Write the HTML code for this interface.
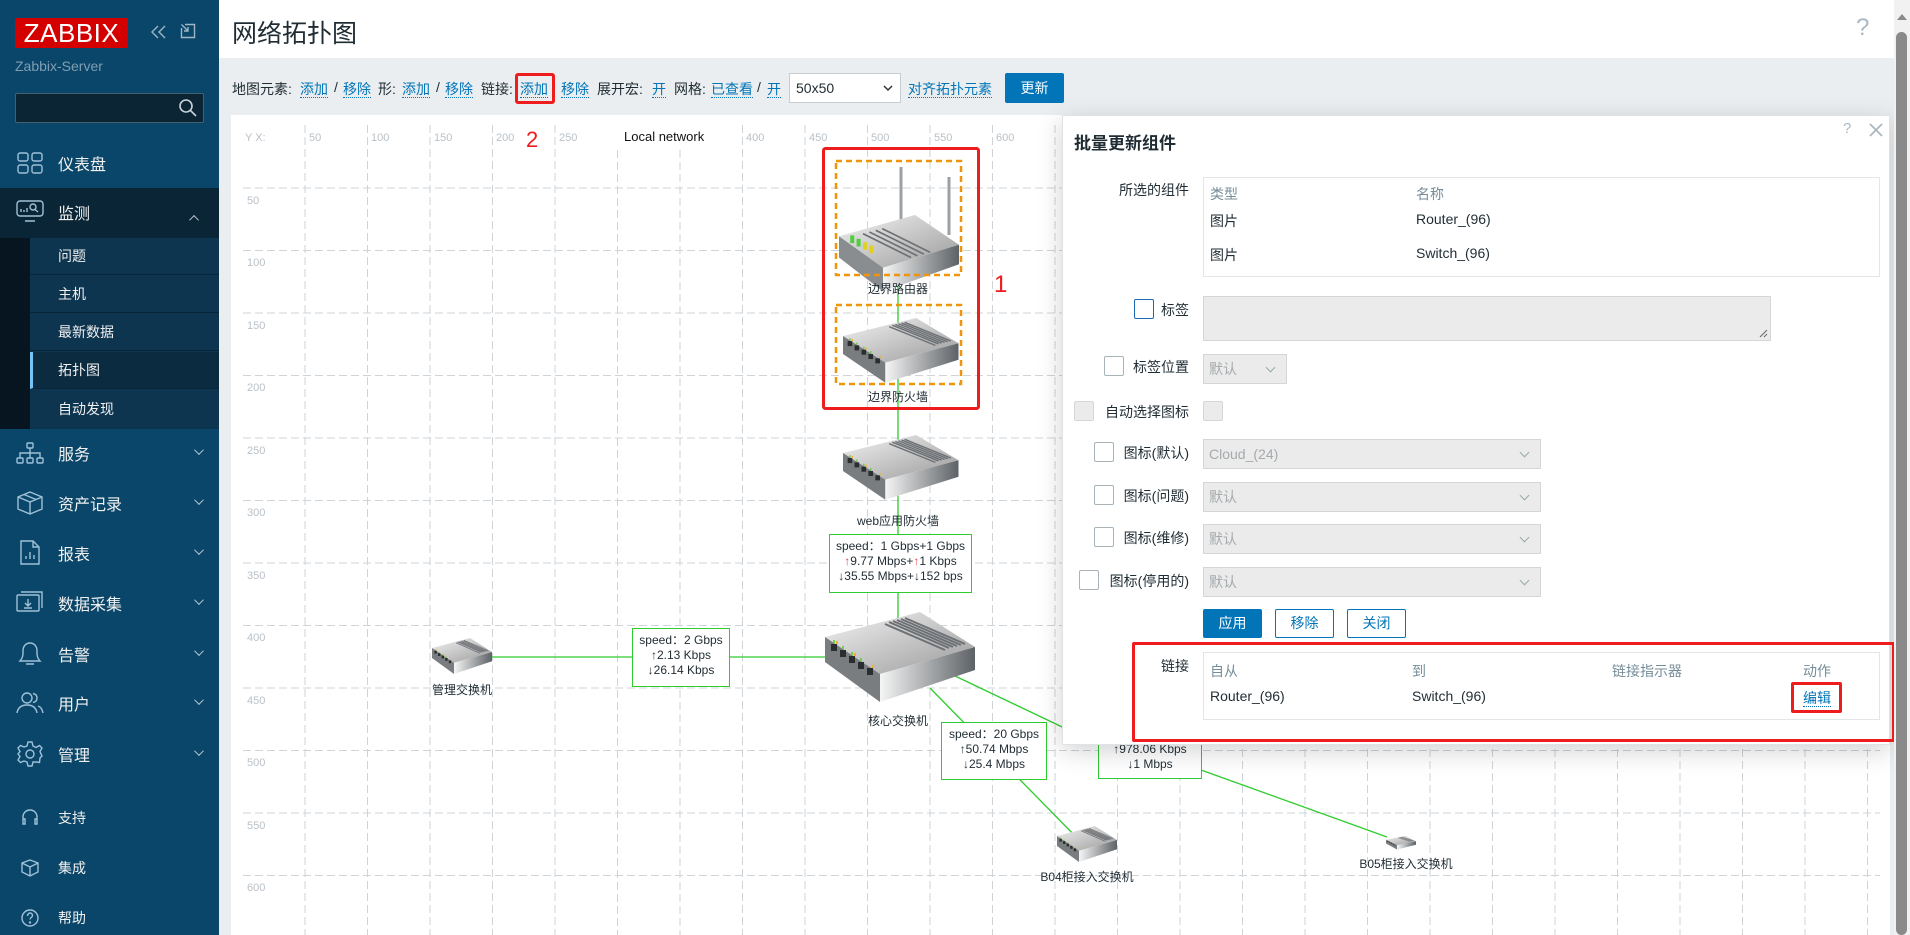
<!DOCTYPE html>
<html><head><meta charset="utf-8">
<style>
*{margin:0;padding:0;box-sizing:border-box}
body{width:1910px;height:935px;overflow:hidden;background:#ebeef0;font-family:"Liberation Sans","Noto Sans CJK SC",sans-serif;font-size:14px;color:#1f2c33;position:relative}
.a{position:absolute;white-space:nowrap}
#sb{position:absolute;left:0;top:0;width:219px;height:935px;background:#0a4669;color:#f2f2f2}
.mi{position:absolute;left:0;width:219px;font-size:16px;color:#f0f0f0}
.mi .t{position:absolute;left:58px;transform:translateY(-50%)}
.mi svg.ic{position:absolute;left:16px;transform:translateY(-50%)}
.mi .ch{position:absolute;left:193px;transform:translateY(-50%);width:7px;height:7px;border-right:1.3px solid #b9c7d0;border-bottom:1.3px solid #b9c7d0;margin-top:-4px;rotate:45deg}
.sub{position:absolute;left:30px;width:189px;height:37px;border-bottom:1px solid #08263a;font-size:14px;color:#f0f0f0;padding-left:28px;line-height:37px}
.lk{color:#0275b8;border-bottom:1px dotted #0275b8}
.tb{position:absolute;top:79px;white-space:nowrap;font-size:14px}
.spd{position:absolute;border:1.5px solid #2ecc2e;background:#fff;font-size:12px;line-height:15px;text-align:center;color:#1f2c33;padding-top:4px}
.dl{position:absolute;font-size:12px;color:#1f2c33;transform:translateX(-50%);white-space:nowrap}
.cb{position:absolute;width:20px;height:20px;border:1px solid #a9b3ba;border-radius:2px;background:#fff}
.cbd{background:#ebebeb;border-color:#d3d7da}
.sel{position:absolute;background:#ebebeb;border:1px solid #d3d7da;color:#a5aaad;padding-left:5px;line-height:28px;font-size:14px}
.sel:after{content:"";position:absolute;right:12px;top:9px;width:6px;height:6px;border-right:1.3px solid #9aa;border-bottom:1.3px solid #9aa;transform:rotate(45deg)}
.fl{position:absolute;text-align:right;font-size:14px;color:#1f2c33}
.btn{position:absolute;height:29px;line-height:27px;text-align:center;border:1px solid #0275b8;color:#0275b8;background:#fff;border-radius:2px;font-size:14px}
</style></head><body>

<!-- sidebar -->
<div id="sb">
 <div class="a" style="left:15px;top:18px;width:113px;height:30px;background:#d40000;color:#fff;font-size:26px;line-height:30px;text-align:center;letter-spacing:0.5px">ZABBIX</div>
 <svg class="a" style="left:150px;top:24px" width="18" height="16" viewBox="0 0 18 16" fill="none" stroke="#9fb6c5" stroke-width="1.4"><path d="M8 2L2 8L8 14M15 2L9 8L15 14"/></svg>
 <svg class="a" style="left:180px;top:23px" width="16" height="16" viewBox="0 0 16 16" fill="none" stroke="#9fb6c5" stroke-width="1.4"><path d="M5 1.5H14.5V14.5H1.5V5M1.5 1.5L8 8M8 4V8H4"/></svg>
 <div class="a" style="left:15px;top:58px;color:#7f9eb2;font-size:14px">Zabbix-Server</div>
 <div class="a" style="left:15px;top:93px;width:189px;height:30px;background:#0b2535;border:1px solid #44606f;border-radius:2px"></div>
 <svg class="a" style="left:178px;top:98px" width="20" height="20" viewBox="0 0 20 20" fill="none" stroke="#c8d4da" stroke-width="1.6"><circle cx="8" cy="8" r="6"/><path d="M12.5 12.5L18 18"/></svg>

 <div class="mi" style="top:163px"><svg class="ic" width="28" height="22" viewBox="0 0 28 22" fill="none" stroke="#9fc1d8" stroke-width="1.4"><rect x="2" y="1" width="10" height="8" rx="2"/><rect x="16" y="1" width="10" height="8" rx="2"/><rect x="2" y="13" width="10" height="8" rx="2"/><rect x="16" y="13" width="10" height="8" rx="2"/></svg><span class="t">仪表盘</span></div>
 <div class="a" style="left:0;top:188px;width:219px;height:50px;background:#0a2536"></div>
 <div class="mi" style="top:212px"><svg class="ic" width="28" height="24" viewBox="0 0 28 24" fill="none" stroke="#9fc1d8" stroke-width="1.4"><rect x="1" y="1" width="26" height="15" rx="3"/><path d="M9 21H19M5 12V9M8 12V10M11 12V8"/><circle cx="17" cy="7" r="3"/><path d="M19 9.5L22 12"/></svg><span class="t">监测</span><span class="ch" style="rotate:225deg;margin-top:2px"></span></div>
 <div class="a" style="left:0;top:238px;width:30px;height:191px;background:#061520"></div>
 <div class="a" style="left:30px;top:238px;width:189px;height:191px;background:#0d3550"></div>
 <div class="sub" style="top:238px">问题</div>
 <div class="sub" style="top:276px">主机</div>
 <div class="sub" style="top:314px">最新数据</div>
 <div class="sub" style="top:352px;background:#0b2b40;border-left:3px solid #73c5f5;padding-left:25px">拓扑图</div>
 <div class="sub" style="top:391px;border:none">自动发现</div>
 <div class="mi" style="top:453px"><svg class="ic" width="28" height="22" viewBox="0 0 28 22" fill="none" stroke="#9fc1d8" stroke-width="1.4"><rect x="11" y="1" width="6" height="5" rx="1"/><rect x="1" y="16" width="6" height="5" rx="1"/><rect x="11" y="16" width="6" height="5" rx="1"/><rect x="21" y="16" width="6" height="5" rx="1"/><path d="M14 6V16M4 16V11H24V16"/></svg><span class="t">服务</span><span class="ch"></span></div>
 <div class="mi" style="top:503px"><svg class="ic" width="28" height="26" viewBox="0 0 28 26" fill="none" stroke="#9fc1d8" stroke-width="1.4"><path d="M14 2L26 7V19L14 24L2 19V7ZM2 7L14 12L26 7M14 12V24M8 4.5L20 9.5"/></svg><span class="t">资产记录</span><span class="ch"></span></div>
 <div class="mi" style="top:553px"><svg class="ic" width="28" height="26" viewBox="0 0 28 26" fill="none" stroke="#9fc1d8" stroke-width="1.4"><path d="M5 1H17L23 7V24H5ZM17 1V7H23M10 19V16M14 19V12M18 19V15"/></svg><span class="t">报表</span><span class="ch"></span></div>
 <div class="mi" style="top:603px"><svg class="ic" width="28" height="24" viewBox="0 0 28 24" fill="none" stroke="#9fc1d8" stroke-width="1.4"><rect x="1" y="4" width="22" height="16" rx="1"/><path d="M5 1H26V17M12 8V15M9 12L12 15L15 12M8 17H16"/></svg><span class="t">数据采集</span><span class="ch"></span></div>
 <div class="mi" style="top:654px"><svg class="ic" width="28" height="26" viewBox="0 0 28 26" fill="none" stroke="#9fc1d8" stroke-width="1.4"><path d="M4 20C7 17 7 14 7 10C7 5 10 2 14 2C18 2 21 5 21 10C21 14 21 17 24 20ZM10 23H18"/></svg><span class="t">告警</span><span class="ch"></span></div>
 <div class="mi" style="top:703px"><svg class="ic" width="28" height="24" viewBox="0 0 28 24" fill="none" stroke="#9fc1d8" stroke-width="1.4"><circle cx="11" cy="7" r="5"/><path d="M1 22C2 16 6 14 11 14C16 14 20 16 21 22M17 2.5C20 3 21 5 21 7C21 9 20 11 17 11.5M22 15C25 16 26 18 27 22"/></svg><span class="t">用户</span><span class="ch"></span></div>
 <div class="mi" style="top:754px"><svg class="ic" width="28" height="28" viewBox="0 0 28 28" fill="none" stroke="#9fc1d8" stroke-width="1.4"><circle cx="14" cy="14" r="4"/><path d="M12 2H16L17 6L20 7.5L23.5 5.5L26 8L24 11.5L25 14L26 16L24 18L23.5 22.5L20 22L17 22L16 26H12L11 22L8 21L4.5 22.5L2 20L4 16.5L2 14L4 11.5L2 8L4.5 5.5L8 7L11 6Z"/></svg><span class="t">管理</span><span class="ch"></span></div>
 <div class="mi" style="top:818px;font-size:14px"><svg class="ic" width="28" height="20" viewBox="0 0 28 20" fill="none" stroke="#9fc1d8" stroke-width="1.4"><path d="M7 14V9C7 5 10 2 14 2C18 2 21 5 21 9V14M7 11H9V16H7ZM19 11H21V16H19Z"/></svg><span class="t">支持</span></div>
 <div class="mi" style="top:868px;font-size:14px"><svg class="ic" width="28" height="20" viewBox="0 0 28 20" fill="none" stroke="#9fc1d8" stroke-width="1.4"><path d="M14 2L22 5V14L14 18L6 14V5ZM6 5L14 9L22 5M14 9V18"/></svg><span class="t">集成</span></div>
 <div class="mi" style="top:918px;font-size:14px"><svg class="ic" width="28" height="20" viewBox="0 0 28 20" fill="none" stroke="#9fc1d8" stroke-width="1.4"><circle cx="14" cy="10" r="8"/><path d="M11.5 8C11.5 6 13 5 14 5C15.5 5 16.5 6 16.5 7.5C16.5 9.5 14 9.5 14 11.5"/><circle cx="14" cy="14.5" r="0.5"/></svg><span class="t">帮助</span></div>
</div>

<!-- header -->
<div class="a" style="left:219px;top:0;width:1676px;height:58px;background:#fff"></div>
<div class="a" style="left:232px;top:14px;font-size:25px;color:#1f2c33">网络拓扑图</div>
<div class="a" style="left:1856px;top:14px;font-size:24px;color:#aab8c2">?</div>

<!-- toolbar -->
<div class="tb" style="left:232px">地图元素:</div>
<div class="tb" style="left:300px"><span class="lk">添加</span></div>
<div class="tb" style="left:334px">/</div>
<div class="tb" style="left:343px"><span class="lk">移除</span></div>
<div class="tb" style="left:378px">形:</div>
<div class="tb" style="left:402px"><span class="lk">添加</span></div>
<div class="tb" style="left:436px">/</div>
<div class="tb" style="left:445px"><span class="lk">移除</span></div>
<div class="tb" style="left:481px">链接:</div>
<div class="tb" style="left:520px"><span class="lk">添加</span></div>
<div class="tb" style="left:561px"><span class="lk">移除</span></div>
<div class="tb" style="left:597px">展开宏:</div>
<div class="tb" style="left:652px"><span class="lk">开</span></div>
<div class="tb" style="left:674px">网格:</div>
<div class="tb" style="left:711px"><span class="lk">已查看</span></div>
<div class="tb" style="left:757px">/</div>
<div class="tb" style="left:767px"><span class="lk">开</span></div>
<div class="a" style="left:789px;top:73px;width:112px;height:30px;background:#fff;border:1px solid #c7ccd0;padding-left:6px;line-height:28px;font-size:14px">50x50</div>
<svg class="a" style="left:883px;top:84px" width="10" height="8" viewBox="0 0 10 8" fill="none" stroke="#333" stroke-width="1.5"><path d="M1 2L5 6L9 2"/></svg>
<div class="tb" style="left:908px"><span class="lk">对齐拓扑元素</span></div>
<div class="a" style="left:1005px;top:73px;width:59px;height:30px;background:#0275b8;color:#fff;line-height:30px;text-align:center;border-radius:2px">更新</div>
<div class="a" style="left:515px;top:73px;width:40px;height:31px;border:3px solid #ee1c1c;border-radius:3px"></div>

<!-- map -->
<div class="a" style="left:231px;top:115px;width:1659px;height:820px;background:#fff"></div>

<svg class="a" style="left:0;top:0" width="1910" height="935">
<g stroke="#cfd4d8" stroke-width="1" stroke-dasharray="8,4">
<line x1="305" y1="125" x2="305" y2="935"/><line x1="367.5" y1="125" x2="367.5" y2="935"/><line x1="430" y1="125" x2="430" y2="935"/><line x1="492.5" y1="125" x2="492.5" y2="935"/><line x1="555" y1="125" x2="555" y2="935"/><line x1="617.5" y1="150" x2="617.5" y2="935"/><line x1="680" y1="150" x2="680" y2="935"/><line x1="742.5" y1="125" x2="742.5" y2="935"/><line x1="805" y1="125" x2="805" y2="935"/><line x1="867.5" y1="125" x2="867.5" y2="935"/><line x1="930" y1="125" x2="930" y2="935"/><line x1="992.5" y1="125" x2="992.5" y2="935"/><line x1="1055" y1="125" x2="1055" y2="935"/><line x1="1117.5" y1="125" x2="1117.5" y2="935"/><line x1="1180" y1="125" x2="1180" y2="935"/><line x1="1242.5" y1="125" x2="1242.5" y2="935"/><line x1="1305" y1="125" x2="1305" y2="935"/><line x1="1367.5" y1="125" x2="1367.5" y2="935"/><line x1="1430" y1="125" x2="1430" y2="935"/><line x1="1492.5" y1="125" x2="1492.5" y2="935"/><line x1="1555" y1="125" x2="1555" y2="935"/><line x1="1617.5" y1="125" x2="1617.5" y2="935"/><line x1="1680" y1="125" x2="1680" y2="935"/><line x1="1742.5" y1="125" x2="1742.5" y2="935"/><line x1="1805" y1="125" x2="1805" y2="935"/><line x1="1867.5" y1="125" x2="1867.5" y2="935"/>
<line x1="243" y1="188" x2="1880" y2="188"/><line x1="243" y1="250.5" x2="1880" y2="250.5"/><line x1="243" y1="313" x2="1880" y2="313"/><line x1="243" y1="375.5" x2="1880" y2="375.5"/><line x1="243" y1="438" x2="1880" y2="438"/><line x1="243" y1="500.5" x2="1880" y2="500.5"/><line x1="243" y1="563" x2="1880" y2="563"/><line x1="243" y1="625.5" x2="1880" y2="625.5"/><line x1="243" y1="688" x2="1880" y2="688"/><line x1="243" y1="750.5" x2="1880" y2="750.5"/><line x1="243" y1="813" x2="1880" y2="813"/><line x1="243" y1="875.5" x2="1880" y2="875.5"/>
</g>
<g fill="#b9c1c7" font-size="11" font-family="Liberation Sans, sans-serif">
<text x="245" y="141">Y X:</text>
<text x="309" y="141">50</text><text x="371" y="141">100</text><text x="434" y="141">150</text><text x="496" y="141">200</text><text x="559" y="141">250</text><text x="746" y="141">400</text><text x="809" y="141">450</text><text x="871" y="141">500</text><text x="934" y="141">550</text><text x="996" y="141">600</text>
<text x="247" y="204">50</text><text x="247" y="266">100</text><text x="247" y="329">150</text><text x="247" y="391">200</text><text x="247" y="454">250</text><text x="247" y="516">300</text><text x="247" y="579">350</text><text x="247" y="641">400</text><text x="247" y="704">450</text><text x="247" y="766">500</text><text x="247" y="829">550</text><text x="247" y="891">600</text>
</g>
<text x="624" y="141" font-size="13" fill="#111" font-family="Liberation Sans, sans-serif">Local network</text>
<text x="526" y="147" font-size="22" fill="#ee1c1c" font-family="Liberation Sans, sans-serif">2</text>
<text x="994" y="292" font-size="24" fill="#ee1c1c" font-family="Liberation Sans, sans-serif">1</text>
<defs>
<linearGradient id="gt" x1="0" y1="0" x2="1" y2="1"><stop offset="0" stop-color="#f2f2f2"/><stop offset="1" stop-color="#9a9a9a"/></linearGradient>
<linearGradient id="gr" x1="0" y1="0" x2="1" y2="0"><stop offset="0" stop-color="#f5f5f5"/><stop offset="1" stop-color="#5d6266"/></linearGradient>
<g id="sw">
<polygon points="0,25 95,0 150,35 55,62" fill="url(#gt)"/>
<polygon points="0,25 55,62 55,90 0,50" fill="#7a7d80"/>
<polygon points="55,62 150,35 150,58 55,90" fill="url(#gr)"/>
<g stroke="#6d7175" stroke-width="2"><path d="M60 12L120 38M64 10L124 36M68 9L128 35M72 8L132 34M76 7L136 33M80 6L140 32"/></g>
<g fill="#2a2e30"><rect x="6" y="32" width="6" height="7"/><rect x="15" y="38" width="6" height="7"/><rect x="24" y="44" width="6" height="7"/><rect x="33" y="50" width="6" height="7"/><rect x="42" y="56" width="6" height="7"/></g>
<g fill="#6fd04a"><rect x="8" y="28" width="2" height="3"/><rect x="17" y="34" width="2" height="3"/><rect x="26" y="40" width="2" height="3"/><rect x="35" y="46" width="2" height="3"/></g>
<g fill="#f0b030"><rect x="11" y="29" width="2" height="3"/><rect x="29" y="41" width="2" height="3"/><rect x="47" y="53" width="2" height="3"/></g>
</g>
</defs>
<g stroke="#2ecc2e" stroke-width="1.3" fill="none">
<line x1="898" y1="275" x2="898" y2="630"/>
<line x1="490" y1="657" x2="832" y2="657"/>
<line x1="930" y1="688" x2="1082" y2="843"/>
<line x1="953" y1="675" x2="1100" y2="745"/>
<line x1="1201" y1="770" x2="1387" y2="837"/>
</g>
<g transform="translate(839,165)">
<line x1="62" y1="2" x2="62" y2="60" stroke="#9aa0a4" stroke-width="3"/>
<line x1="110" y1="12" x2="110" y2="70" stroke="#9aa0a4" stroke-width="3"/>
<g transform="translate(0,50) scale(0.8,0.85)"><polygon points="0,25 95,0 150,35 55,62" fill="url(#gt)"/><polygon points="0,25 55,62 55,90 0,50" fill="#8a8d90"/><polygon points="55,62 150,35 150,58 55,90" fill="url(#gr)"/><g stroke="#6d7175" stroke-width="2"><path d="M30 22L90 50M38 20L98 48M46 18L106 46M54 16L114 44"/></g><g fill="#4ece3a"><rect x="14" y="24" width="5" height="9"/><rect x="22" y="28" width="5" height="9"/></g><g fill="#e0d020"><rect x="30" y="32" width="5" height="9"/><rect x="38" y="36" width="5" height="9"/></g></g>
</g>
<use href="#sw" transform="translate(843,318) scale(0.77,0.72)"/>
<use href="#sw" transform="translate(843,435) scale(0.77,0.72)"/>
<use href="#sw" transform="translate(825,612) scale(1,1)"/>
<use href="#sw" transform="translate(432,638) scale(0.4,0.4)"/>
<use href="#sw" transform="translate(1057,826) scale(0.4,0.4)"/>
<use href="#sw" transform="translate(1386,836) scale(0.2,0.15)"/>
<g fill="none" stroke="#f0940a" stroke-width="2.5" stroke-dasharray="6,4"><rect x="836" y="161" width="125" height="114"/><rect x="836" y="305" width="125" height="79"/></g>
<rect x="823.5" y="148.5" width="155" height="260" fill="none" stroke="#ee1c1c" stroke-width="3" rx="2"/>
</svg>

<div class="dl" style="left:898px;top:280px">边界路由器</div>
<div class="dl" style="left:898px;top:388px">边界防火墙</div>
<div class="dl" style="left:898px;top:512px">web应用防火墙</div>
<div class="dl" style="left:898px;top:712px">核心交换机</div>
<div class="dl" style="left:462px;top:681px">管理交换机</div>
<div class="dl" style="left:1087px;top:868px">B04柜接入交换机</div>
<div class="dl" style="left:1406px;top:855px">B05柜接入交换机</div>

<div class="spd" style="left:829px;top:534px;width:143px;height:59px">speed：1 Gbps+1 Gbps<br><span style="color:#e44">↑</span>9.77 Mbps+<span style="color:#e44">↑</span>1 Kbps<br>↓35.55 Mbps+↓152 bps</div>
<div class="spd" style="left:632px;top:628px;width:98px;height:59px">speed：2 Gbps<br>↑2.13 Kbps<br>↓26.14 Kbps</div>
<div class="spd" style="left:941px;top:722px;width:106px;height:58px">speed：20 Gbps<br>↑50.74 Mbps<br>↓25.4 Mbps</div>
<div class="spd" style="left:1098px;top:725px;width:104px;height:54px;padding-top:16px">↑978.06 Kbps<br>↓1 Mbps</div>

<!-- dialog -->
<div class="a" style="left:1062px;top:115px;width:828px;height:630px;background:#fff;border:1px solid #dfe3e6;box-shadow:0 6px 24px rgba(0,0,0,0.18)"></div>
<div class="a" style="left:1074px;top:129px;font-size:17px;font-weight:bold;color:#1f2c33">批量更新组件</div>
<div class="a" style="left:1843px;top:120px;font-size:15px;color:#aab8c2">?</div>
<svg class="a" style="left:1869px;top:123px" width="14" height="14" viewBox="0 0 14 14" stroke="#aab8c2" stroke-width="1.8"><path d="M1 1L13 13M13 1L1 13"/></svg>

<div class="fl" style="left:1080px;width:109px;top:180px">所选的组件</div>
<div class="a" style="left:1203px;top:177px;width:677px;height:100px;border:1px solid #e3e6e8"></div>
<div class="a" style="left:1210px;top:184px;color:#768d99">类型</div><div class="a" style="left:1416px;top:184px;color:#768d99">名称</div>
<div class="a" style="left:1210px;top:211px">图片</div><div class="a" style="left:1416px;top:211px">Router_(96)</div>
<div class="a" style="left:1210px;top:245px">图片</div><div class="a" style="left:1416px;top:245px">Switch_(96)</div>

<div class="cb" style="left:1134px;top:299px;border-color:#1c6cb5"></div>
<div class="fl" style="left:1150px;width:39px;top:300px">标签</div>
<div class="a" style="left:1203px;top:296px;width:568px;height:45px;background:#ebebeb;border:1px solid #d3d7da"></div>
<svg class="a" style="left:1759px;top:329px" width="9" height="9" viewBox="0 0 9 9" stroke="#666"><path d="M8 1L1 8M8 5L5 8"/></svg>

<div class="cb" style="left:1104px;top:356px"></div>
<div class="fl" style="left:1120px;width:69px;top:357px">标签位置</div>
<div class="sel" style="left:1203px;top:354px;width:84px;height:30px">默认</div>

<div class="cb cbd" style="left:1074px;top:401px"></div>
<div class="fl" style="left:1090px;width:99px;top:402px">自动选择图标</div>
<div class="cb cbd" style="left:1203px;top:401px"></div>

<div class="cb" style="left:1094px;top:442px"></div>
<div class="fl" style="left:1110px;width:79px;top:443px">图标(默认)</div>
<div class="sel" style="left:1203px;top:439px;width:338px;height:30px">Cloud_(24)</div>

<div class="cb" style="left:1094px;top:485px"></div>
<div class="fl" style="left:1110px;width:79px;top:486px">图标(问题)</div>
<div class="sel" style="left:1203px;top:482px;width:338px;height:30px">默认</div>

<div class="cb" style="left:1094px;top:527px"></div>
<div class="fl" style="left:1110px;width:79px;top:528px">图标(维修)</div>
<div class="sel" style="left:1203px;top:524px;width:338px;height:30px">默认</div>

<div class="cb" style="left:1079px;top:570px"></div>
<div class="fl" style="left:1100px;width:89px;top:571px">图标(停用的)</div>
<div class="sel" style="left:1203px;top:567px;width:338px;height:30px">默认</div>

<div class="btn" style="left:1203px;top:609px;width:59px;background:#0275b8;color:#fff">应用</div>
<div class="btn" style="left:1275px;top:609px;width:59px">移除</div>
<div class="btn" style="left:1347px;top:609px;width:59px">关闭</div>

<div class="fl" style="left:1140px;width:49px;top:656px">链接</div>
<div class="a" style="left:1203px;top:652px;width:677px;height:68px;border:1px solid #e3e6e8"></div>
<div class="a" style="left:1210px;top:661px;color:#768d99">自从</div>
<div class="a" style="left:1412px;top:661px;color:#768d99">到</div>
<div class="a" style="left:1612px;top:661px;color:#768d99">链接指示器</div>
<div class="a" style="left:1803px;top:661px;color:#768d99">动作</div>
<div class="a" style="left:1210px;top:688px">Router_(96)</div>
<div class="a" style="left:1412px;top:688px">Switch_(96)</div>
<div class="a" style="left:1803px;top:688px"><span class="lk">编辑</span></div>
<div class="a" style="left:1791px;top:682px;width:51px;height:31px;border:3px solid #ee1c1c;border-radius:2px"></div>
<div class="a" style="left:1132px;top:642px;width:763px;height:100px;border:3px solid #ee1c1c;border-radius:2px"></div>

<!-- scrollbar -->
<div class="a" style="left:1894px;top:0;width:16px;height:935px;background:#f1f1f1"></div>
<svg class="a" style="left:1895px;top:12px" width="14" height="10" viewBox="0 0 14 10"><path d="M2 8L7 2L12 8Z" fill="#8a8a8a"/></svg>
<div class="a" style="left:1896px;top:32px;width:11px;height:903px;background:#8a8a8a;border-radius:6px"></div>
</body></html>
